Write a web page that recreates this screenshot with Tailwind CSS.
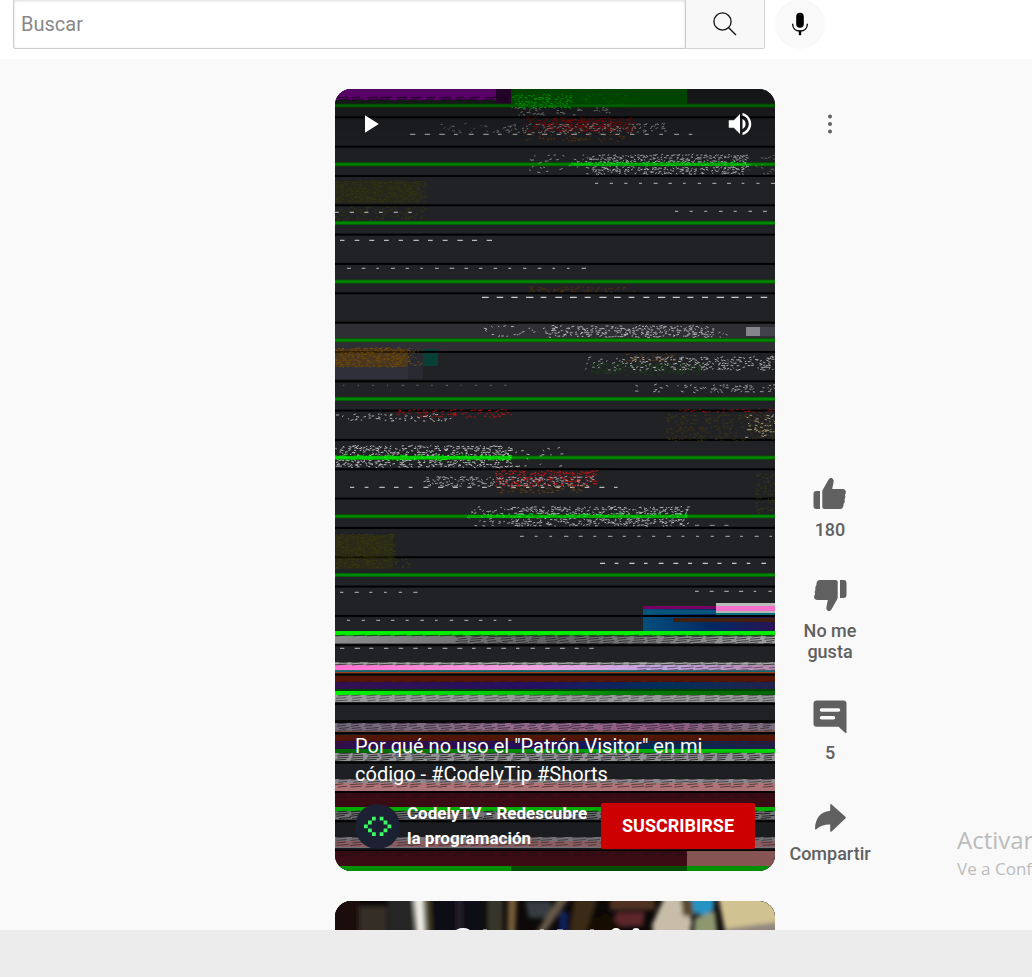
<!DOCTYPE html>
<html lang="es">
<head>
<meta charset="utf-8">
<title>Shorts</title>
<script src="https://cdn.jsdelivr.net/npm/@tailwindcss/browser@4"></script>
</head>
<body class="flex h-screen flex-col overflow-hidden bg-[#f9f9f9] font-[Roboto,sans-serif]">
<header class="flex shrink-0 items-start bg-white pr-[207px] pb-2.5 pl-[13px]">
  <form class="-mt-px flex h-[50px] flex-1">
    <input type="text" aria-label="Buscar" placeholder="Buscar" class="min-w-0 flex-1 rounded-l-xs border border-[#ccc] bg-white px-[7px] text-xl text-[#111] shadow-[inset_0_1px_3px_#ddd] outline-none placeholder:text-[#888]">
    <button type="button" aria-label="Buscar vídeos" class="flex w-[79px] items-center justify-center rounded-r-xs border border-l-0 border-[#d3d3d3] bg-[#f8f8f8]">
      <svg class="size-[30px]" viewBox="0 0 30 30" fill="none" stroke="#0f0f0f" stroke-width="1.3"><circle cx="12.5" cy="12.5" r="8.6"/><path d="M18.7 18.7L26 26"/></svg>
    </button>
  </form>
  <button type="button" aria-label="Buscar por voz" class="-mt-px ml-2.5 flex size-[50px] items-center justify-center rounded-full bg-[#f9f9f9]">
    <svg class="size-[30px]" viewBox="0 0 30 30"><rect x="11.2" y="3.7" width="7.6" height="15" rx="3.8"/><path d="M7.6 14.8C7.6 19.5 10.8 22 15 22s7.4-2.5 7.4-7.2" fill="none" stroke="#000" stroke-width="1.3"/><path d="M15 22v4.2" stroke="#000" stroke-width="2.4"/></svg>
  </button>
</header>

<main class="relative min-h-0 flex-1 overflow-hidden pt-[30px] pl-[335px]">
  <section class="flex gap-[15px]">
    <article class="relative flex h-[782px] w-[440px] shrink-0 flex-col justify-between overflow-hidden rounded-2xl bg-[#202124] p-5">
      <svg id="frame" class="absolute inset-0 h-full w-full" viewBox="0 0 440 782" preserveAspectRatio="none" aria-hidden="true"></svg>
      <div class="relative flex justify-between text-white">
        <button type="button" aria-label="Reproducir"><svg class="size-[30px]" viewBox="0 0 24 24" fill="currentColor"><path d="M8 5v14l11-7z"/></svg></button>
        <button type="button" aria-label="Silenciar"><svg class="size-[30px]" viewBox="0 0 24 24" fill="currentColor"><path d="M3 9v6h4l5 5V4L7 9H3zm13.5 3A4.5 4.5 0 0 0 14 7.97v8.05c1.48-.73 2.5-2.25 2.5-4.02zM14 3.23v2.06c2.89.86 5 3.54 5 6.71s-2.11 5.85-5 6.71v2.06c4.01-.91 7-4.49 7-8.77s-2.99-7.86-7-8.77z"/></svg></button>
      </div>
      <div class="relative text-white">
        <h2 class="text-xl leading-7">Por qué no uso el "Patrón Visitor" en mi código - #CodelyTip #Shorts</h2>
        <div class="mt-[13px] flex items-center">
          <svg class="size-[45px] shrink-0" viewBox="0 0 45 45" role="img" aria-label="CodelyTV"><circle cx="22.5" cy="22.5" r="22.5" fill="#1b2133"/><path fill="#3df765" d="M17 12.7h3.8v3.8H17zM13 16.6h3.8v3.8H13zM9 20.5h3.8v3.8H9zM13 24.4h3.8v3.8H13zM17 28.3h3.8v3.8H17zM24.7 12.7h3.8v3.8h-3.8zM28.6 16.6h3.8v3.8h-3.8zM32.5 20.5h3.8v3.8h-3.8zM28.6 24.4h3.8v3.8h-3.8zM24.7 28.3h3.8v3.8h-3.8z"/></svg>
          <a href="#" class="ml-[7px] flex-1 text-[17px] leading-[25px] font-bold">CodelyTV - Redescubre la programación</a>
          <button type="button" class="h-[46px] w-[154px] shrink-0 rounded-xs bg-[#c00] text-lg font-bold">SUSCRIBIRSE</button>
        </div>
      </div>
    </article>

    <div class="flex w-20 shrink-0 flex-col items-center justify-between pt-5 pb-[7px] text-[#606060]">
      <button type="button" aria-label="Más acciones"><svg class="size-[30px]" viewBox="0 0 30 30" fill="#606060"><circle cx="15" cy="7.4" r="2"/><circle cx="15" cy="15" r="2"/><circle cx="15" cy="22.6" r="2"/></svg></button>
      <div class="flex flex-col items-center gap-[35px] text-lg leading-[21px] font-medium">
        <button type="button" class="flex flex-col items-center gap-[5px]">
          <svg class="size-10" viewBox="0 0 40 40" fill="currentColor"><path d="M6.3 17H10v18H6.3Q3.5 35 3.5 32V20Q3.5 17 6.3 17z"/><path d="M12.3 17.4Q12.3 16.6 12.8 15.8L18.6 5.6Q20.3 2.8 22.5 4.4Q24.3 5.8 23.5 8.6L22.2 15H32.6Q36 15.3 35.9 18.3Q35.8 20 34.9 20.7Q36 23 34.6 25.2Q35.4 28 33.6 30Q33.6 35 30 35H14.3Q12.3 35 12.3 33z"/></svg>
          180
        </button>
        <button type="button" class="flex flex-col items-center gap-[5px]">
          <svg class="size-10 rotate-180" viewBox="0 0 40 40" fill="currentColor"><path d="M6.3 17H10v18H6.3Q3.5 35 3.5 32V20Q3.5 17 6.3 17z"/><path d="M12.3 17.4Q12.3 16.6 12.8 15.8L18.6 5.6Q20.3 2.8 22.5 4.4Q24.3 5.8 23.5 8.6L22.2 15H32.6Q36 15.3 35.9 18.3Q35.8 20 34.9 20.7Q36 23 34.6 25.2Q35.4 28 33.6 30Q33.6 35 30 35H14.3Q12.3 35 12.3 33z"/></svg>
          <span>No me<br>gusta</span>
        </button>
        <button type="button" class="flex flex-col items-center gap-[5px]">
          <svg class="size-10" viewBox="0 0 40 40" fill="currentColor"><path fill-rule="evenodd" d="M6.8 3.5H33.2Q36.5 3.5 36.5 6.8V35Q36.5 36.9 35 35.8L28.6 29.7H6.8Q3.5 29.7 3.5 26.4V6.8Q3.5 3.5 6.8 3.5zM11.5 11.3a1.75 1.75 0 0 0 0 3.5h17a1.75 1.75 0 0 0 0-3.5zM11.5 19a1.75 1.75 0 0 0 0 3.5h12a1.75 1.75 0 0 0 0-3.5z"/></svg>
          5
        </button>
        <button type="button" class="flex flex-col items-center gap-[5px]">
          <svg class="size-10" viewBox="0 0 40 40" fill="currentColor"><path d="M20.2 7Q20.2 5.2 21.6 6.4L35.4 18.8Q36.4 19.7 35.4 20.6L21.6 33.4Q20.2 34.5 20.2 33V26.5Q11.5 26.3 6.2 31.2Q5 32 5 30.5Q5.500 14.500 20.200 12.800z"/></svg>
          Compartir
        </button>
      </div>
    </div>
  </section>

  <article class="mt-[30px] h-[782px] w-[440px] overflow-hidden rounded-2xl bg-black">
    <svg class="w-full" viewBox="0 0 440 60" aria-hidden="true">
      <defs><filter id="soft" x="-5%" y="-20%" width="110%" height="140%"><feGaussianBlur stdDeviation="2.200"/></filter></defs>
      <rect width="440" height="60" fill="#0c0908"/>
      <g filter="url(#soft)">
        <path fill="#1a0807" d="M-10-10h35v70h-35z"/><path fill="#342d27" d="M24 5h28v55H24z"/><path fill="#252828" d="M53-5h25v65H53z"/>
        <path fill="#e9e9df" d="M78-10h11l3 70h-9z"/><path fill="#5b512c" d="M91-8h4l2 68h-4z"/><path fill="#080b13" d="M98-5h50v65H98z"/><path fill="#251f2b" d="M121-5h7v65h-7z"/>
        <path fill="#35342c" d="M152-8h16v68h-16z"/><path fill="#745b39" d="M173-8h9l-3 68h-7z"/><path fill="#353e43" d="M190 0h26v17h-22z"/><path fill="#65594a" d="M226-8h12l-34 48h-8z"/>
        <path fill="#11205f" d="M225 11h8l-2 40h-8z"/><path fill="#3b2c16" d="M240-6h24l-17 50h-15z"/><path fill="#503024" d="M275-5h45v14h-45z"/><path fill="#5c2829" d="M281 11h29l-2 14-30 1z"/>
        <path fill="#160706" d="M256 20l15-9 14 14-6 30h-23z"/><path fill="#c7bda8" d="M330-5h15l12 25-7 40h-28l-5-36z"/><path fill="#5a4a2e" d="M345-10h15v25h-12z"/><path fill="#2594c3" d="M355-10h24v18l-8 7-12-3z"/>
        <path fill="#8d9770" d="M360 17l20-7 5 50h-29z"/><path fill="#d1c292" d="M382-10h68v34l-60 6z"/><path fill="#928780" d="M390 28l60-8v40h-64z"/>
      </g>
      <g fill="#fff"><ellipse cx="128" cy="31" rx="8" ry="4"/><ellipse cx="281" cy="31" rx="5" ry="4"/><ellipse cx="301" cy="31" rx="4" ry="4"/><path opacity=".5" d="M148 28h4v6h-4zM205 28h4v6h-4zM222 28h6v6h-6zM255 28h4v6h-4z"/></g>
    </svg>
  </article>

  <aside class="absolute top-[765px] right-0 w-[75px] overflow-hidden font-['Open_Sans',sans-serif] whitespace-nowrap text-[#bcbcbc]">
    <p class="text-2xl leading-8">Activar</p>
    <p class="text-[17px] leading-[26px]">Ve a Conf</p>
  </aside>
</main>
<footer class="h-[47px] shrink-0 bg-[#ececec]"></footer>

<script>
// Draws the glitched video frame in a 440 x 782 coordinate space.
let seed = 7;
const rnd = () => (seed = (seed * 16807) % 2147483647) / 2147483647;
let out = '';
const STEP = 14.67;
const rect = (x, y, w, h, c, o = 1) => { out += `<rect x="${x}" y="${y}" width="${w}" height="${h}" fill="${c}" opacity="${o}"/>`; };
const noise = (x0, x1, y0, y1, c, density, o = .8) => {
  let d = '';
  for (let y = y0; y < y1; y += 2)
    for (let x = x0; x < x1; x += 3)
      if (rnd() < density) d += `M${(x + rnd() * 2).toFixed(1)} ${(y + rnd()).toFixed(1)}l${(1.2 + rnd() * 2).toFixed(1)} ${(rnd() * 2.4 - 1.2).toFixed(1)}`;
  out += `<path d="${d}" stroke="${c}" stroke-width="1" fill="none" opacity="${o}"/>`;
};
const dashes = (x0, x1, y, w = 3, o = .65, c = '#ddd') => {
  let d = '';
  for (let x = x0; x < x1; x += STEP) d += `M${x.toFixed(1)} ${y + .3}h${(w - .5 + rnd() * 2).toFixed(1)}`;
  out += `<path d="${d}" stroke="${c}" stroke-width="1.2" opacity="${o}"/>`;
};
const streaks = (x0, x1, y0, y1, c, o = .7, gap = 2.5) => {
  let d = '';
  for (let y = y0; y < y1; y += gap)
    for (let x = x0; x < x1; x += STEP) {
      const dx = rnd() * 4;
      d += `M${(x + dx).toFixed(1)} ${(y + .9).toFixed(1)}l${(8 + rnd() * 5).toFixed(1)} -.9`;
    }
  out += `<path d="${d}" stroke="${c}" stroke-width="1" opacity="${o * .85}"/>`;
};
const fade = (id, stops) => { out += `<linearGradient id="${id}">${stops.map(([p, c]) => `<stop offset="${p}" stop-color="${c}"/>`).join('')}</linearGradient>`; };

rect(0, 0, 440, 782, '#212226');
rect(0, 0, 161, 11, '#8a00a0'); rect(161, 0, 15, 15, '#380440'); streaks(0, 176, 8, 12, '#200028', 1, 2);
rect(176, 0, 176, 16, '#006800');
rect(0, 235, 440, 28, '#2e2e34'); rect(0, 264, 73, 26, '#30303a'); rect(73, 264, 15, 26, '#292a31');
rect(88, 260, 15, 17, '#084038'); rect(411, 238, 14, 9, '#85858c'); rect(425, 238, 15, 9, '#42424c');
// regular dark and green scanlines
for (let i = 0; i < 27; i++) rect(0, 27.3 + i * 29.33, 440, 2, '#000');
for (let i = 0; i < 9; i++) { rect(0, 14.6 + i * 58.67, 440, 4, '#005c00'); rect(0, 15.4 + i * 58.67, 440, 2.4, '#008600'); }
// noisy clusters
noise(176, 235, 6, 19, '#00d000', .75, 1); noise(235, 295, 5, 16, '#009000', .2); noise(176, 275, 19, 27, '#aaa', .3);
noise(190, 300, 29, 43, '#b00000', .55, .8); noise(205, 280, 31, 43, '#c80000', .6, .7); noise(160, 330, 35, 45, '#bbb', .5, .7); noise(105, 160, 35, 45, '#999', .15, .6);
noise(190, 290, 45, 53, '#8c4800', .35, .6); dashes(75, 360, 45, 4, .75);
noise(190, 250, 66, 86, '#aaa', .16); noise(250, 410, 66, 86, '#ccc', .64); noise(410, 440, 66, 86, '#999', .16, .6); rect(235, 74, 175, 3, '#00a800'); noise(235, 415, 73, 77, '#00ff20', .6);
dashes(260, 440, 94); noise(0, 88, 92, 114, '#404000', .75, .6); noise(0, 90, 118, 132, '#404000', .4, .6); rect(0, 92, 85, 22, '#3a3a00', .25);
dashes(0, 80, 123, 3, .7); dashes(340, 440, 122); dashes(5, 154, 151, 4, .8); dashes(12, 250, 179);
noise(190, 300, 198, 203, '#603500', .45); dashes(147, 440, 208, 6, .9);
noise(147, 220, 237, 248, '#ccc', .18); noise(215, 380, 237, 248, '#ccc', .64); noise(380, 410, 243, 249, '#aaa', .13);
noise(0, 73, 259, 279, '#a05c00', .65, .7); rect(0, 260, 73, 18, '#654000', .45); noise(73, 88, 260, 278, '#80500c', .3, .6);
noise(250, 300, 268, 282, '#a8c0a8', .22); noise(295, 440, 268, 281, '#ccc', .5); noise(255, 365, 275, 286, '#145010', .45, .7); noise(290, 340, 265, 272, '#8c4810', .4, .6);
noise(300, 375, 296, 304, '#bbb', .14); noise(375, 440, 296, 303, '#bbb', .45); dashes(8, 180, 296, 1, .3);
noise(60, 176, 321, 329, '#cc1010', .48, .8); noise(0, 115, 325, 332, '#ccc', .38); noise(330, 440, 320, 324, '#b01010', .4, .7);
noise(330, 440, 326, 351, '#504000', .38, .6); noise(410, 440, 326, 350, '#ccb890', .35);
noise(0, 176, 357, 379, '#ddd', .6); rect(0, 367, 176, 3.5, '#00c800'); noise(0, 176, 366, 372, '#00ff00', .5); noise(176, 225, 357, 379, '#ccc', .08);
noise(160, 260, 382, 397, '#d81414', .6, .9); noise(88, 260, 388, 398, '#bbb', .48, .8); dashes(15, 290, 398, 4, .8); noise(160, 250, 397, 405, '#9c5000', .42, .6);
noise(132, 176, 418, 438, '#bbb', .25); noise(176, 352, 418, 437, '#ccc', .62); rect(133, 426, 219, 3, '#00a800'); noise(133, 352, 425, 429, '#00ff20', .5);
noise(420, 440, 385, 424, '#464600', .35, .6); dashes(185, 440, 447, 3, .6); dashes(360, 400, 436, 4, .5);
noise(0, 60, 445, 468, '#484600', .72, .6); rect(0, 446, 58, 34, '#3a3a00', .35); noise(0, 75, 470, 480, '#484600', .45, .6);
dashes(265, 440, 474, 4, .9); dashes(5, 90, 503); dashes(360, 440, 502); dashes(12, 175, 531, 3); dashes(5, 260, 559, 4);
// blue and pink block
fade('blue', [[0, '#064f7c'], [.5, '#002a62'], [1, '#2a1454']]);
rect(308, 517, 73, 3, '#760063'); rect(308, 520, 132, 22, 'url(#blue)'); rect(338, 529, 102, 4, '#42200c'); rect(308, 521, 73, 4, '#06557b');
rect(381, 514, 59, 4, '#bbb'); rect(381, 517, 59, 5, '#f570cb'); rect(381, 522, 59, 2, '#b5b5b8'); rect(381, 524, 59, 2, '#087078'); rect(308, 526, 132, 2, '#000');
// wide bands in the lower part
fade('grey', [[0, '#8d8d8f'], [.5, '#626264'], [1, '#a2a2a5']]);
fade('pink', [[0, '#ff70cf'], [.45, '#efa4e0'], [.75, '#bca5dd'], [1, '#b48aa8']]);
fade('violet', [[0, '#331050'], [.45, '#251060'], [.75, '#00305a'], [1, '#24204c']]);
fade('greenOut', [[0, '#00f400'], [.45, '#00c000'], [.65, '#008000'], [1, '#006400']]);
fade('greenIn', [[0, '#006c00'], [.45, '#009800'], [1, '#00e600']]);
fade('mauve', [[0, '#777080'], [.45, '#9c6e92'], [.75, '#98608a'], [1, '#827582']]);
rect(0, 542, 440, 4.5, '#00f000'); rect(0, 547, 440, 7.5, 'url(#grey)'); streaks(120, 440, 547, 554, '#202020', .9, 2.3); streaks(0, 440, 546, 548, '#222', .8);
rect(0, 573, 440, 11, '#606066'); rect(0, 573.5, 440, 2, '#aaa'); rect(0, 576, 440, 5, 'url(#pink)'); rect(0, 581.5, 440, 1.6, '#0a6870'); rect(0, 583, 440, 1.2, '#a04018'); streaks(0, 440, 573, 577, '#222', .8, 2); streaks(300, 440, 578, 583, '#604068', .9);
rect(0, 587, 440, 6, '#561705'); rect(0, 593, 440, 8, 'url(#violet)'); streaks(0, 440, 592, 594, '#3e101a', .9); rect(0, 600, 440, 2, '#004000'); rect(0, 602, 440, 4, 'url(#greenOut)');
rect(0, 606, 440, 7, '#99999c'); streaks(0, 440, 606, 612, '#333', .75, 2.5);
rect(0, 631, 440, 3, '#08080a'); rect(0, 634, 440, 9, 'url(#mauve)'); streaks(0, 440, 634, 642, '#2a2334', .9, 2.3); rect(0, 641.5, 440, 1.4, '#795044');
rect(0, 646, 440, 6, '#561705'); rect(0, 652, 440, 8, 'url(#violet)'); streaks(0, 440, 651, 654, '#4a1018', .8); rect(0, 660, 440, 4, 'url(#greenIn)');
rect(0, 664, 440, 8, '#a0a0a4'); streaks(0, 440, 664, 672, '#252525', 1, 2.1);
rect(0, 690, 440, 5, '#9b9ba0'); rect(0, 694, 440, 8, '#c68488'); streaks(0, 440, 690, 698, '#442b30', .85, 2.4);
rect(0, 704, 440, 15, '#440d17'); streaks(0, 440, 705, 709, '#251018', .8); rect(0, 718, 440, 4.5, '#00cb00'); rect(0, 722.5, 440, 8, '#88888c'); streaks(0, 440, 722, 730, '#161618', 1, 2.2);
rect(0, 748, 440, 11, '#8d8d92'); rect(0, 752, 440, 6, '#ab7479'); streaks(0, 440, 748, 757, '#403036', .85, 2.5);
rect(0, 762, 440, 15, '#3b0c14'); rect(352, 762, 88, 15, '#865453'); streaks(0, 352, 763, 766, '#201016', .8);
rect(0, 777, 176, 5, '#009000'); rect(176, 777, 176, 5, '#004e00'); rect(352, 777, 88, 5, '#009000');
// shading behind the controls and the title
out += '<linearGradient id="top" x2="0" y2="1"><stop offset="0" stop-opacity=".38"/><stop offset="1" stop-opacity="0"/></linearGradient><linearGradient id="bottom" x2="0" y2="1"><stop offset="0" stop-opacity="0"/><stop offset="1" stop-opacity=".2"/></linearGradient>';
rect(0, 0, 440, 90, 'url(#top)'); rect(0, 600, 440, 160, 'url(#bottom)');
document.getElementById('frame').innerHTML = out;
</script>
</body>
</html>
